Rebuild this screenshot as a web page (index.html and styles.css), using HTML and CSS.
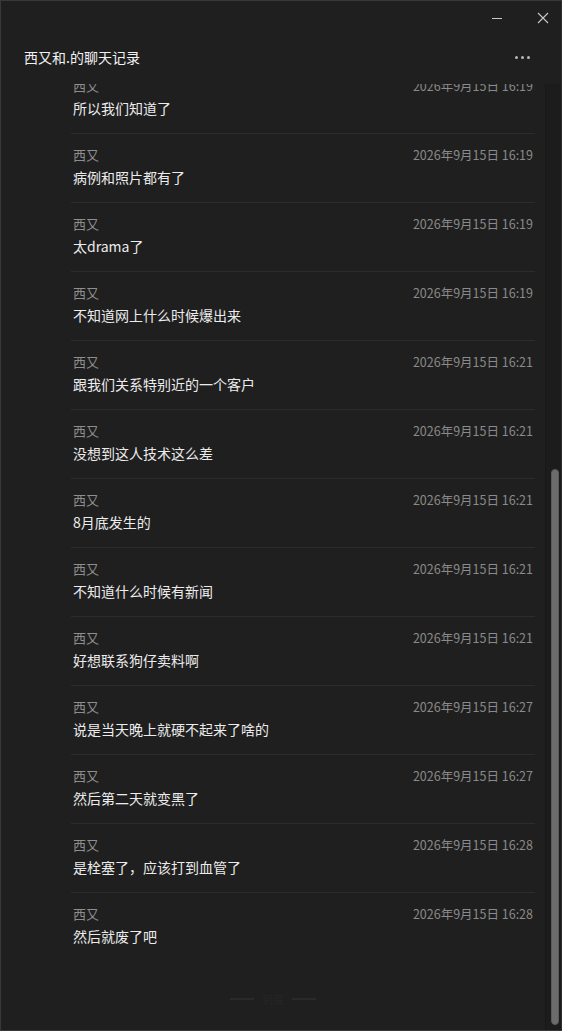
FILE: index.html
```html
<!DOCTYPE html>
<html lang="zh-CN">
<head>
<meta charset="utf-8">
<title>西又和.的聊天记录</title>
<link rel="stylesheet" href="styles.css">
</head>
<body>
<div class="window">
  <div class="titlebar">
    <span class="ctl ctl-min" aria-label="最小化">
      <svg width="12" height="12" viewBox="0 0 12 12"><path d="M1 6.5h10" stroke="#c8c8c8" stroke-width="1"/></svg>
    </span>
    <span class="ctl ctl-close" aria-label="关闭">
      <svg width="12" height="12" viewBox="0 0 12 12"><path d="M1 1L11 11M11 1L1 11" stroke="#c8c8c8" stroke-width="1.1"/></svg>
    </span>
  </div>
  <div class="header">
    <div class="title">西又和.的聊天记录</div>
    <div class="more"><i></i><i></i><i></i></div>
  </div>
  <div class="body">
    <div class="list">
      <div class="rows">
        <div class="row"><div class="meta"><span class="name">西又</span><span class="time">2026年9月15日 16:19</span></div><div class="text">所以我们知道了</div></div>
        <div class="row"><div class="meta"><span class="name">西又</span><span class="time">2026年9月15日 16:19</span></div><div class="text">病例和照片都有了</div></div>
        <div class="row"><div class="meta"><span class="name">西又</span><span class="time">2026年9月15日 16:19</span></div><div class="text">太drama了</div></div>
        <div class="row"><div class="meta"><span class="name">西又</span><span class="time">2026年9月15日 16:19</span></div><div class="text">不知道网上什么时候爆出来</div></div>
        <div class="row"><div class="meta"><span class="name">西又</span><span class="time">2026年9月15日 16:21</span></div><div class="text">跟我们关系特别近的一个客户</div></div>
        <div class="row"><div class="meta"><span class="name">西又</span><span class="time">2026年9月15日 16:21</span></div><div class="text">没想到这人技术这么差</div></div>
        <div class="row"><div class="meta"><span class="name">西又</span><span class="time">2026年9月15日 16:21</span></div><div class="text">8月底发生的</div></div>
        <div class="row"><div class="meta"><span class="name">西又</span><span class="time">2026年9月15日 16:21</span></div><div class="text">不知道什么时候有新闻</div></div>
        <div class="row"><div class="meta"><span class="name">西又</span><span class="time">2026年9月15日 16:21</span></div><div class="text">好想联系狗仔卖料啊</div></div>
        <div class="row"><div class="meta"><span class="name">西又</span><span class="time">2026年9月15日 16:27</span></div><div class="text">说是当天晚上就硬不起来了啥的</div></div>
        <div class="row"><div class="meta"><span class="name">西又</span><span class="time">2026年9月15日 16:27</span></div><div class="text">然后第二天就变黑了</div></div>
        <div class="row"><div class="meta"><span class="name">西又</span><span class="time">2026年9月15日 16:28</span></div><div class="text">是栓塞了，应该打到血管了</div></div>
        <div class="row row-last"><div class="meta"><span class="name">西又</span><span class="time">2026年9月15日 16:28</span></div><div class="text">然后就废了吧</div></div>
      </div>
      <div class="end"><span class="line"></span><span class="end-text">到底</span><span class="line"></span></div>
    </div>
    <div class="scrollbar"><div class="thumb"></div></div>
  </div>
</div>
</body>
</html>
```

FILE: styles.css
```css
* { box-sizing: border-box; }
html, body { margin: 0; padding: 0; background: #1f1f1f; }
body {
  font-family: "Noto Sans CJK SC", "Noto Sans", "Liberation Sans", sans-serif;
  color: #e6e6e6;
}
.window {
  width: 562px;
  height: 1031px;
  background: #1f1f1f;
  border: 1px solid #383838;
  border-right-color: #2e2e2e;
  display: flex;
  flex-direction: column;
  overflow: hidden;
}
.titlebar {
  height: 33px;
  display: flex;
  justify-content: flex-end;
  align-items: center;
  padding-right: 12px;
  gap: 34px;
}
.ctl { display: flex; width: 12px; height: 12px; }
.header {
  height: 50px;
  display: flex;
  align-items: center;
  justify-content: space-between;
  padding: 0 31px 4px 23px;
}
.title {
  font-size: 14px;
  line-height: 20px;
  color: #f2f2f2;
}
.more { display: flex; gap: 3px; align-items: center; }
.more i { width: 3px; height: 3px; border-radius: 50%; background: #b8b8b8; display: block; }
.body {
  flex: 1;
  display: flex;
  min-height: 0;
}
.list {
  flex: 1;
  overflow: hidden;
  padding: 0 10px 0 70px;
}
.rows { margin-top: -20px; }
.row {
  border-top: 1px solid #2c2c2c;
  padding: 12px 2px 15px 2px;
}
.meta {
  display: flex;
  justify-content: space-between;
  align-items: center;
  height: 18px;
  font-size: 13px;
  line-height: 18px;
  color: #8e8e8e;
}
.time { font-size: 12.5px; color: #8a8a8a; }
.text {
  margin-top: 3px;
  font-size: 14px;
  line-height: 20px;
  color: #ececec;
}
.end {
  margin-top: 30px;
  display: flex;
  align-items: center;
  justify-content: center;
  gap: 8px;
  padding-right: 60px;
  font-size: 11px;
}
.end .line { width: 24px; height: 2px; border-top: 1px solid #2a2a2a; border-bottom: 1px solid #2a2a2a; }
.end-text { color: #262626; }
.scrollbar {
  width: 16px;
  border-left: 1px solid #181818;
  background: #1c1c1c;
  padding: 0 1px 0 5px;
}
.thumb {
  margin-top: 385px;
  height: 556px;
  width: 8px;
  border-radius: 4px;
  background: #6c6c6c;
  border: 1px solid #5a5a5a;
}
```
